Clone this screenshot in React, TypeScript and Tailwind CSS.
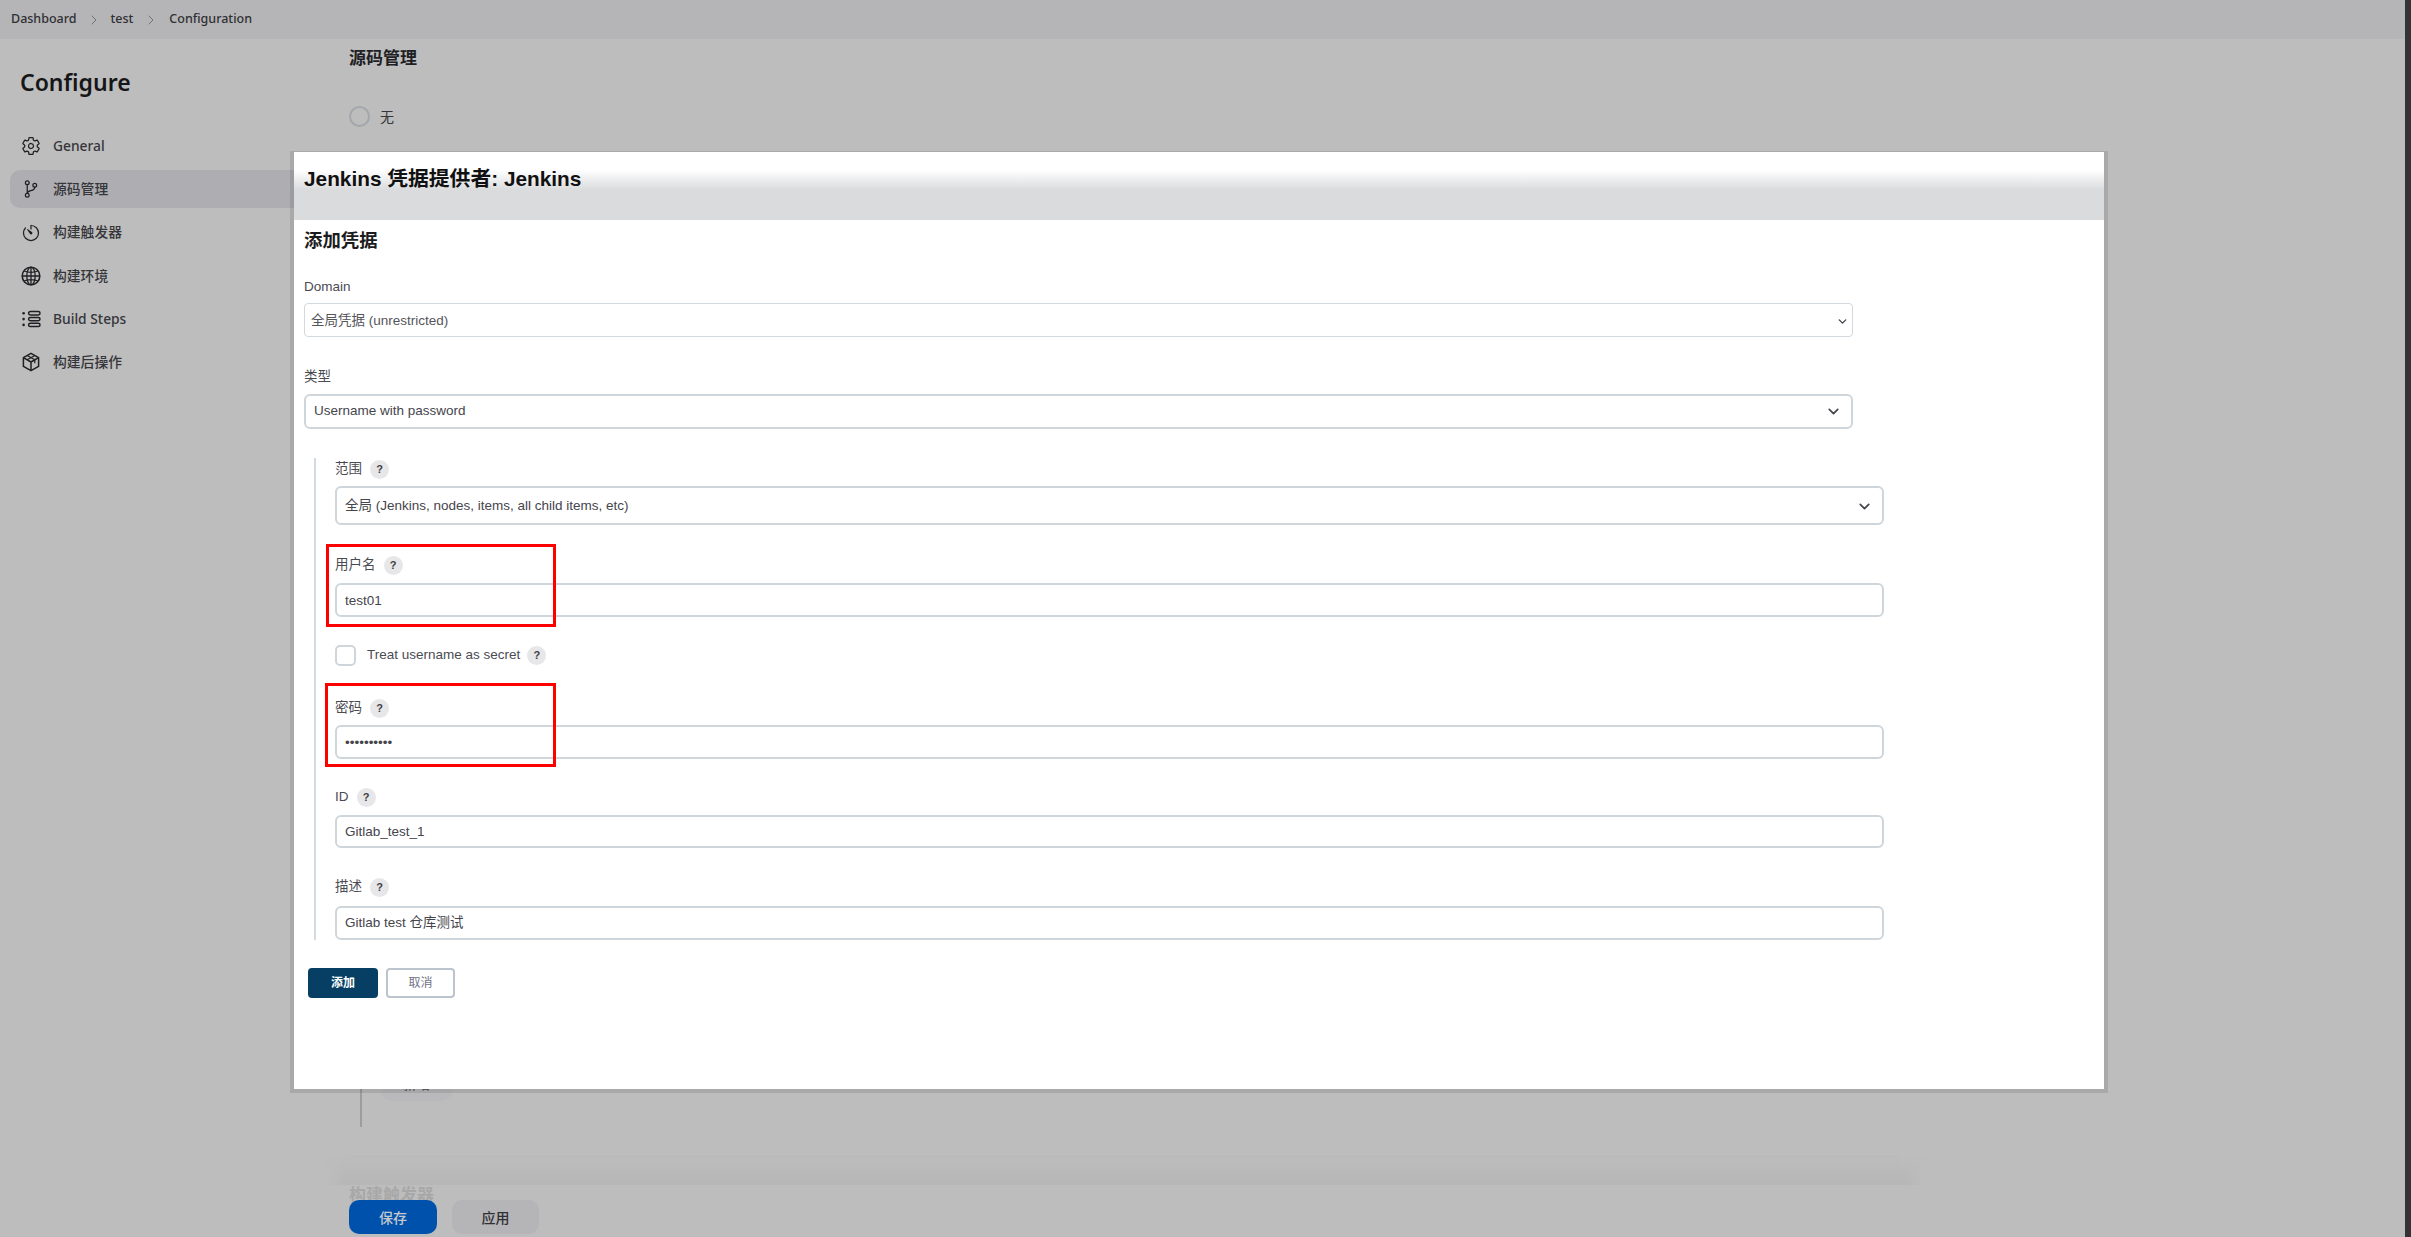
import { ChevronDown, ChevronRight } from "lucide-react";
import type { ReactNode } from "react";
import { IoGitBranchOutline, IoSettingsOutline, IoTimerOutline } from "react-icons/io5";

const pageFont = "font-['Noto_Sans','Noto_Sans_CJK_SC',sans-serif]";
const dialogFont = "font-['Liberation_Sans','Noto_Sans_CJK_SC',sans-serif]";

function BuildStepsIcon() {
  return (
    <svg viewBox="0 0 20 20" className="h-5 w-5" fill="none" stroke="currentColor" strokeWidth="1.5">
      <rect x="7.6" y="2.6" width="11.4" height="3.4" rx="1.7" />
      <rect x="7.6" y="8.4" width="11.4" height="3.4" rx="1.7" />
      <rect x="7.6" y="14.2" width="11.4" height="3.4" rx="1.7" />
      <circle cx="2.6" cy="4.3" r="1.3" fill="currentColor" stroke="none" />
      <circle cx="2.6" cy="10.1" r="1.3" fill="currentColor" stroke="none" />
      <circle cx="2.6" cy="15.9" r="1.3" fill="currentColor" stroke="none" />
    </svg>
  );
}

function GlobeIcon() {
  return (
    <svg viewBox="0 0 20 20" className="h-5 w-5" fill="none" stroke="currentColor" strokeWidth="1.3">
      <circle cx="10" cy="10" r="8.8" strokeWidth="1.6" />
      <ellipse cx="10" cy="10" rx="4.2" ry="8.8" />
      <path d="M10 1.2v17.6M1.2 10h17.6M3.2 5q6.8 2.6 13.6 0M3.2 15q6.8-2.6 13.6 0" />
    </svg>
  );
}

function CubeIcon() {
  return (
    <svg
      viewBox="0 0 20 20"
      className="h-5 w-5"
      fill="none"
      stroke="currentColor"
      strokeWidth="1.5"
      strokeLinejoin="round"
    >
      <path d="M10 1.3l7.6 4.3v8.8L10 18.7l-7.6-4.3V5.6z" />
      <path d="M2.4 5.6L10 10l7.6-4.4M10 10v8.7" />
      <path d="M6.2 3.5l7.6 4.3v3.4M13.8 3.5L6.2 7.8" strokeWidth="1.2" />
    </svg>
  );
}

const sideItems = [
  { label: "General", icon: <IoSettingsOutline size={20} /> },
  { label: "源码管理", icon: <IoGitBranchOutline size={20} />, active: true },
  { label: "构建触发器", icon: <IoTimerOutline size={20} /> },
  { label: "构建环境", icon: <GlobeIcon /> },
  { label: "Build Steps", icon: <BuildStepsIcon /> },
  { label: "构建后操作", icon: <CubeIcon /> },
];

function HelpBadge() {
  return (
    <span className="flex h-[19px] w-[19px] items-center justify-center rounded-full bg-[#e7e7e9] text-[11px] font-bold text-[#3f3f46]">
      ?
    </span>
  );
}

function FieldLabel({ text, className = "" }: { text: string; className?: string }) {
  return (
    <div className={`flex h-5 items-center gap-[8px] text-[13.5px] text-[#4b4b52] ${className}`}>
      <span>{text}</span>
      <HelpBadge />
    </div>
  );
}

function TextBox({ children, className = "" }: { children: ReactNode; className?: string }) {
  return (
    <div
      className={`flex w-[1549px] items-center rounded-md border-2 border-[#ced6dc] bg-white pl-2 text-[13.5px] text-[#45454c] ${className}`}
    >
      {children}
    </div>
  );
}

export default function App() {
  return (
    <div className={`relative flex h-[1237px] w-full overflow-hidden bg-[#bdbdbd] ${pageFont}`}>
      <div className="flex min-w-0 flex-1 flex-col">
        <nav className="flex h-[39px] items-center bg-[#b5b5b7] pl-[11px] text-[12.5px] font-medium text-[#2f2f33]">
          <span>Dashboard</span>
          <ChevronRight size={16} strokeWidth={1.3} className="mx-[9px] text-[#68686c]" />
          <span>test</span>
          <ChevronRight size={16} strokeWidth={1.3} className="mx-[10px] text-[#68686c]" />
          <span>Configuration</span>
        </nav>

        <div className="flex flex-1">
          <aside className="w-[349px] shrink-0 pl-[10px] pr-[15px]">
            <h1 className="mt-[28px] pl-[10px] text-[23px] leading-[30px] font-semibold text-[#161618]">Configure</h1>
            <ul className="mt-[30px] flex flex-col gap-[5.3px]">
              {sideItems.map((item) => (
                <li
                  key={item.label}
                  className={`flex h-[38px] items-center gap-[12px] rounded-[10px] pl-[11px] text-[13.8px] font-medium text-[#35353a] ${
                    item.active ? "bg-[#aeaeb2]" : ""
                  }`}
                >
                  <span className="text-[#202024]">{item.icon}</span>
                  {item.label}
                </li>
              ))}
            </ul>
          </aside>

          <main className="w-[1550px]">
            <h2 className="mt-[9px] text-[17px] leading-5 font-semibold text-[#202024]">源码管理</h2>
            <label className="mt-[38px] flex h-[21px] items-center gap-[10px] text-[14px] text-[#35353a]">
              <span className="h-[21px] w-[21px] rounded-full border-2 border-[#a3a7ab]" />
              无
            </label>
            <div className="mt-[53px] ml-[11px] flex h-[947px] flex-col justify-end border-l-2 border-[#9d9d9d] pb-[26px] pl-[19px]">
              <button className="flex h-9 w-[71px] items-center justify-center rounded-[10px] bg-[#b9b9bb] text-[14px] text-[#505055]">
                新增
              </button>
            </div>
            <div className="mt-[29px] h-px bg-[#b3b3b3]" />
            <h2 className="mt-[28px] text-[17px] leading-5 font-semibold text-[#a8a8a8]">构建触发器</h2>
          </main>
        </div>
      </div>
      <div className="w-[6px] shrink-0 bg-[#333333]" />

      {/* sticky save bar of the page behind the dialog */}
      <div className="absolute top-[1155px] left-[310px] h-[30px] w-[1630px] overflow-hidden">
        <div className="absolute inset-x-[26px] top-0 -bottom-3 bg-[linear-gradient(to_bottom,#bdbdbd,#b3b3b3)] blur-[6px]" />
      </div>
      <div className="absolute top-[1200px] left-[349px] flex gap-[15px] text-[14px] font-medium">
        <button className="h-[34px] w-[88px] rounded-[10px] bg-[#0051ab] text-[#c4c9d0]">保存</button>
        <button className="h-[34px] w-[87px] rounded-[10px] bg-[#b5b5b8] text-[#303034]">应用</button>
      </div>

      {/* credentials dialog */}
      <div
        className={`absolute top-[151px] left-[290px] h-[942px] w-[1818px] border-x-4 border-t border-b-4 border-black/10 bg-white bg-clip-padding ${dialogFont}`}
      >
        <div className="h-[68px] bg-[linear-gradient(to_bottom,#ffffff_18px,#dadbdd_38px)] pt-[15px] pl-[10px]">
          <div className="text-[20.8px] leading-6 font-bold text-[#111]">Jenkins 凭据提供者: Jenkins</div>
        </div>

        <div className="pl-[10px]">
          <h3 className="pt-[10px] text-[18.4px] leading-[22px] font-bold text-[#1c1c20]">添加凭据</h3>

          <div className="mt-[27px] text-[13.5px] leading-4 text-[#4b4b52]">Domain</div>
          <div className="mt-2 flex h-[34px] w-[1549px] items-center justify-between rounded-[4px] border border-[#d3dadf] pt-[2px] pr-[3px] pl-[6px] text-[13.5px] text-[#55555c]">
            全局凭据 (unrestricted)
            <ChevronDown size={13} strokeWidth={2.6} className="text-[#45454c]" />
          </div>

          <div className="mt-[32px] text-[13.5px] leading-4 text-[#4b4b52]">类型</div>
          <div className="mt-[9px] flex h-[35px] w-[1549px] items-center justify-between rounded-md border-2 border-[#ced6dc] pr-[9px] pl-2 text-[13.5px] text-[#45454c]">
            Username with password
            <ChevronDown size={17} strokeWidth={2.4} />
          </div>

          <div className="mt-[29px] ml-[10px] w-[1570px] border-l-2 border-[#d3dae0] pl-[19px]">
            <FieldLabel text="范围" className="pt-[2px]" />
            <div className="mt-2 flex h-[39px] w-[1549px] items-center justify-between rounded-md border-2 border-[#ced6dc] pt-[2px] pr-[9px] pl-2 text-[13.5px] text-[#45454c]">
              全局 (Jenkins, nodes, items, all child items, etc)
              <ChevronDown size={17} strokeWidth={2.4} />
            </div>

            <FieldLabel text="用户名" className="mt-[30px]" />
            <TextBox className="mt-2 h-[34px] pt-[2px]">test01</TextBox>

            <div className="mt-[28px] flex h-[21px] items-center text-[13.5px] text-[#4b4b52]">
              <span className="mr-[11px] h-[21px] w-[21px] rounded-[5px] border-2 border-[#ced6dc]" />
              <span className="mr-[7px]">Treat username as secret</span>
              <HelpBadge />
            </div>

            <FieldLabel text="密码" className="mt-[32px]" />
            <TextBox className="mt-[7px] h-[34px] pt-[2px]">••••••••••</TextBox>

            <FieldLabel text="ID" className="mt-[28px]" />
            <TextBox className="mt-[8px] h-[33px] pt-px">Gitlab_test_1</TextBox>

            <FieldLabel text="描述" className="mt-[29px]" />
            <TextBox className="mt-[9px] h-[34px] pt-px">Gitlab test 仓库测试</TextBox>
          </div>

          <div className="mt-[28px] ml-1 flex gap-2 text-[12px]">
            <button className="h-[30px] w-[70px] rounded-[4px] bg-[#063f63] font-bold text-white">添加</button>
            <button className="h-[30px] w-[69px] rounded-[4px] border-2 border-[#bcc5cd] text-[#6f7285]">取消</button>
          </div>
        </div>
      </div>

      {/* red annotation boxes on the screenshot */}
      <div className="absolute top-[544px] left-[326px] h-[83px] w-[230px] border-[3px] border-[#ff0000]" />
      <div className="absolute top-[683px] left-[325px] h-[84px] w-[231px] border-[3px] border-[#ff0000]" />
    </div>
  );
}
